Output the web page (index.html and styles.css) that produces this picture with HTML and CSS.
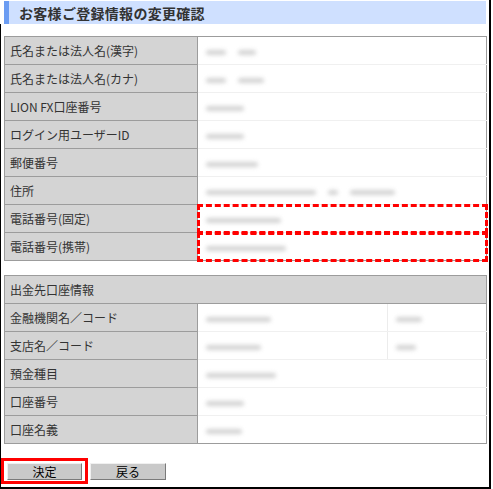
FILE: index.html
```html
<!DOCTYPE html>
<html lang="ja">
<head>
    <meta charset="UTF-8">
    <meta name="viewport" content="width=device-width, initial-scale=1.0">
    <title>お客様ご登録情報の変更確認</title>
    <link rel="stylesheet" href="styles.css">
</head>
<body>
    <div class="page">
        <h1 class="title-bar">お客様ご登録情報の変更確認</h1>

        <div class="content">
            <table class="info-table">
                <colgroup>
                    <col class="label-col">
                    <col>
                </colgroup>
                <tr>
                    <th>氏名または法人名(漢字)</th>
                    <td><span class="mask w20"></span><span class="mask w18 gap"></span></td>
                </tr>
                <tr>
                    <th>氏名または法人名(カナ)</th>
                    <td><span class="mask w20"></span><span class="mask w26 gap"></span></td>
                </tr>
                <tr>
                    <th>LION FX口座番号</th>
                    <td><span class="mask w38"></span></td>
                </tr>
                <tr>
                    <th>ログイン用ユーザーID</th>
                    <td><span class="mask w38"></span></td>
                </tr>
                <tr>
                    <th>郵便番号</th>
                    <td><span class="mask w52"></span></td>
                </tr>
                <tr>
                    <th>住所</th>
                    <td><span class="mask w110"></span><span class="mask w10 gap"></span><span class="mask w45 gap"></span></td>
                </tr>
                <tr>
                    <th>電話番号(固定)</th>
                    <td class="marked"><span class="mask w75"></span></td>
                </tr>
                <tr>
                    <th>電話番号(携帯)</th>
                    <td class="marked"><span class="mask w80"></span></td>
                </tr>
            </table>

            <table class="info-table bank-table">
                <colgroup>
                    <col class="label-col">
                    <col class="name-col">
                    <col>
                </colgroup>
                <tr>
                    <th class="section-head" colspan="3">出金先口座情報</th>
                </tr>
                <tr>
                    <th>金融機関名／コード</th>
                    <td class="name-cell"><span class="mask w65"></span></td>
                    <td class="code-cell"><span class="mask w26"></span></td>
                </tr>
                <tr>
                    <th>支店名／コード</th>
                    <td class="name-cell"><span class="mask w55"></span></td>
                    <td class="code-cell"><span class="mask w20"></span></td>
                </tr>
                <tr>
                    <th>預金種目</th>
                    <td colspan="2"><span class="mask w70"></span></td>
                </tr>
                <tr>
                    <th>口座番号</th>
                    <td colspan="2"><span class="mask w38"></span></td>
                </tr>
                <tr>
                    <th>口座名義</th>
                    <td colspan="2"><span class="mask w36"></span></td>
                </tr>
            </table>

            <div class="actions">
                <div class="btn-mark">
                    <button class="btn" type="button">決定</button>
                </div>
                <button class="btn back-btn" type="button">戻る</button>
            </div>
        </div>
    </div>
</body>
</html>
```

FILE: styles.css
```css
:root {
    --label-bg: #d4d4d4;
    --line: #9c9c9c;
    --text: #333333;
    --title-bg: #cfe0ff;
    --title-mark: #6b9cf2;
    --alert: #ff0000;
}

body {
    margin: 0;
    font-family: "Noto Sans CJK JP", "Noto Sans", sans-serif;
    color: var(--text);
    background: #ffffff;
}

.page {
    width: 489px;
    height: 487px;
    border-right: 2px solid #000;
    border-bottom: 2px solid #000;
    display: flex;
    flex-direction: column;
}

.title-bar {
    margin: 1px 3px 0 4px;
    height: 23px;
    padding-left: 10px;
    display: flex;
    align-items: center;
    background: var(--title-bg);
    border-left: 5px solid var(--title-mark);
    font-size: 14px;
    font-weight: bold;
    letter-spacing: 0.3px;
    color: #333;
}

.content {
    flex: 1;
    border-left: 1px solid #000;
    padding: 12px 2px 0 3px;
}

.info-table {
    width: 100%;
    border-collapse: collapse;
    table-layout: fixed;
    font-size: 12px;
}

.label-col {
    width: 193px;
}

.name-col {
    width: 190px;
}

.info-table th {
    height: 27px;
    padding: 0 0 0 5px;
    text-align: left;
    font-weight: normal;
    background: var(--label-bg);
    border: 1px solid var(--line);
}

.info-table td {
    height: 27px;
    padding: 0 0 0 8px;
    background: #ffffff;
    border-top: 1px solid #f0f0f0;
    border-bottom: 1px solid #f0f0f0;
    border-right: 1px solid var(--line);
    border-left: 1px solid var(--line);
    white-space: nowrap;
}

.info-table tr:first-child td {
    border-top-color: var(--line);
}

.info-table tr:last-child td {
    border-bottom-color: var(--line);
}

.info-table td.marked {
    outline: 3px dashed var(--alert);
    outline-offset: -2px;
}

.bank-table {
    margin-top: 14px;
}

.bank-table td.name-cell {
    border-right: 1px solid #ececec;
}

.bank-table td.code-cell {
    border-left: 1px solid #ececec;
}

/* blurred private values */
.mask {
    display: inline-block;
    height: 5px;
    vertical-align: middle;
    background: #c4c4c4;
    border-radius: 3px;
    filter: blur(2px);
    opacity: 0.75;
}

.mask.gap { margin-left: 12px; }
.w10 { width: 10px; }
.w18 { width: 18px; }
.w20 { width: 20px; }
.w26 { width: 26px; }
.w36 { width: 36px; }
.w38 { width: 38px; }
.w45 { width: 45px; }
.w52 { width: 52px; }
.w55 { width: 55px; }
.w65 { width: 65px; }
.w70 { width: 70px; }
.w75 { width: 75px; }
.w80 { width: 80px; }
.w110 { width: 110px; }

.actions {
    margin: 14px 0 0 -3px;
    display: flex;
    align-items: flex-start;
}

.btn-mark {
    border: 3px solid var(--alert);
    padding: 2px 3px 1px;
    display: flex;
}

.btn {
    width: 75px;
    height: 17px;
    padding: 0;
    font-family: "Noto Sans CJK JP", sans-serif;
    font-size: 12px;
    line-height: 13px;
    color: #000;
    background: #c9c9c9;
    border: 1px solid;
    border-color: #f0f0f0 #7a7a7a #7a7a7a #f0f0f0;
}

.back-btn {
    width: 76px;
    margin: 5px 0 0 2px;
}
```
